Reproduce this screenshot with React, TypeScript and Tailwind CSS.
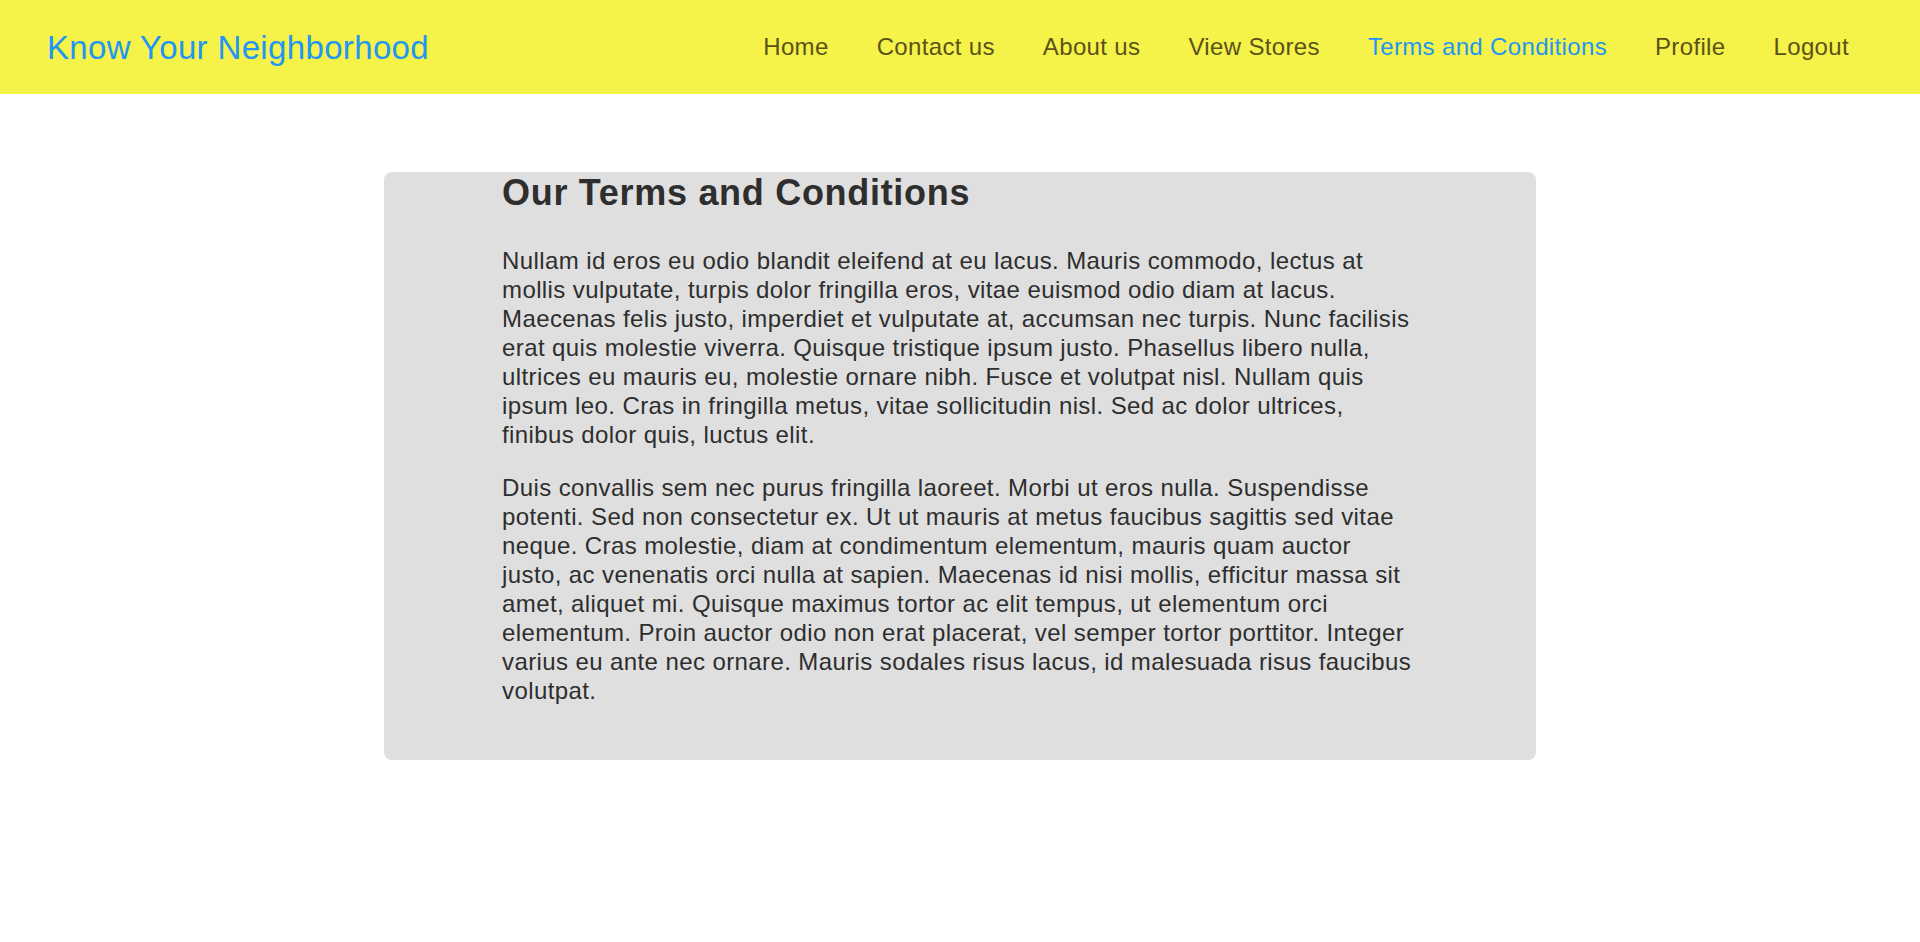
const navLinks = [
    { label: 'Home' },
    { label: 'Contact us' },
    { label: 'About us' },
    { label: 'View Stores' },
    { label: 'Terms and Conditions', active: true },
    { label: 'Profile' },
    { label: 'Logout' },
];

const paragraphs = [
    'Nullam id eros eu odio blandit eleifend at eu lacus. Mauris commodo, lectus at mollis vulputate, turpis dolor fringilla eros, vitae euismod odio diam at lacus. Maecenas felis justo, imperdiet et vulputate at, accumsan nec turpis. Nunc facilisis erat quis molestie viverra. Quisque tristique ipsum justo. Phasellus libero nulla, ultrices eu mauris eu, molestie ornare nibh. Fusce et volutpat nisl. Nullam quis ipsum leo. Cras in fringilla metus, vitae sollicitudin nisl. Sed ac dolor ultrices, finibus dolor quis, luctus elit.',
    'Duis convallis sem nec purus fringilla laoreet. Morbi ut eros nulla. Suspendisse potenti. Sed non consectetur ex. Ut ut mauris at metus faucibus sagittis sed vitae neque. Cras molestie, diam at condimentum elementum, mauris quam auctor justo, ac venenatis orci nulla at sapien. Maecenas id nisi mollis, efficitur massa sit amet, aliquet mi. Quisque maximus tortor ac elit tempus, ut elementum orci elementum. Proin auctor odio non erat placerat, vel semper tortor porttitor. Integer varius eu ante nec ornare. Mauris sodales risus lacus, id malesuada risus faucibus volutpat.',
];

// ─── Navbar ──────────────────────────────────────────────────────────
const Navbar = () => (
    <header className="flex h-[94px] items-center justify-between bg-[#f5f249] pl-[47px] pr-[71px]">
        <a href="#" className="text-[33px] leading-none tracking-[0.35px] text-[#2196f3]">
            Know Your Neighborhood
        </a>
        <nav className="flex items-center gap-[48px]">
            {navLinks.map((link) => (
                <a
                    key={link.label}
                    href="#"
                    className={`text-[24px] leading-none tracking-[0.35px] ${
                        link.active ? 'text-[#2196f3]' : 'text-[#5a5218]'
                    }`}
                >
                    {link.label}
                </a>
            ))}
        </nav>
    </header>
);

// ─── Page ────────────────────────────────────────────────────────────
export default function App() {
    return (
        <div className="min-h-screen bg-white font-['Liberation_Sans',Arial,sans-serif] text-[#2e2e2e]">
            <Navbar />

            <main className="pt-[78px]">
                <section className="mx-auto w-[60%] rounded-lg bg-[#dfdfdf] pb-[55px]">
                    <div className="ml-[118px] w-[912px]">
                        <h1 className="mb-[33px] text-[36px] font-bold leading-[41px] tracking-[0.7px]">
                            Our Terms and Conditions
                        </h1>
                        {paragraphs.map((text, i) => (
                            <p
                                key={i}
                                className={`text-[24px] leading-[29px] tracking-[0.4px] ${i > 0 ? 'mt-6' : ''}`}
                            >
                                {text}
                            </p>
                        ))}
                    </div>
                </section>
            </main>
        </div>
    );
}
